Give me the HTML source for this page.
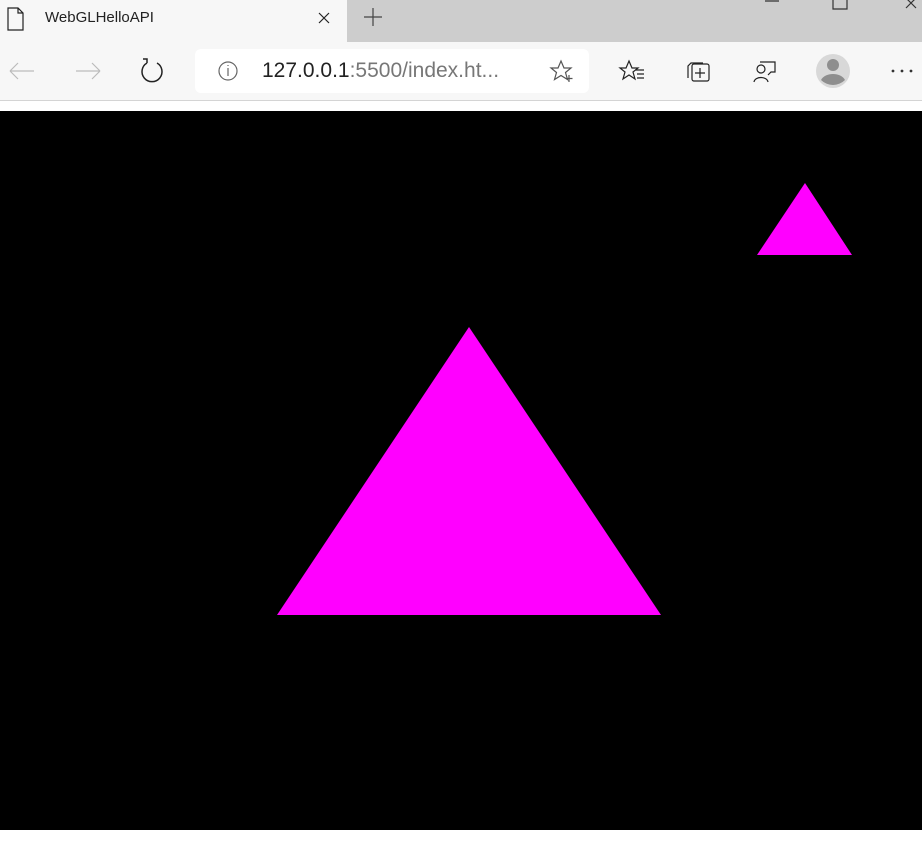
<!DOCTYPE html><html><head><style>
body{margin:0;width:922px;height:860px;background:#fff;position:relative;overflow:hidden;font-family:"Liberation Sans",sans-serif}
.a{position:absolute}
</style></head><body>
<div class="a" style="left:0;top:0;width:922px;height:42px;background:#cdcdcd"></div>
<div class="a" style="left:0;top:0;width:347px;height:43px;background:#f7f7f7"></div>
<div class="a" style="left:0;top:42px;width:922px;height:58px;background:#f7f7f7"></div>
<div class="a" style="left:0;top:100px;width:922px;height:1px;background:#d4d4d4"></div>
<div class="a" style="left:195px;top:49px;width:394px;height:44px;background:#fff;border-radius:6px"></div>
<svg class="a" style="left:0;top:0" width="922" height="110">
<g fill="none" stroke="#222" stroke-width="1.2">
<path d="M8 8h10l5 5v17H8z M18 8v5h5"/>
<path d="M319 13l10 10M329 13l-10 10"/>
<path d="M373 8v18M364 17h18" stroke="#444"/>
<path d="M765 1h14M833 -1v10h14V-1M906 -2l10 10M916 -2l-10 10" stroke="#333"/>
<path d="M34 71H10M10 71l8-8M10 71l8 8" stroke="#bbb"/>
<path d="M76 71h24M100 71l-8-8M100 71l-8 8" stroke="#bbb"/>
<path d="M147 63a10 10 0 1 0 10 0M147 63v-4h-4" stroke="#222" stroke-width="1.5"/>
<circle cx="228" cy="71" r="9" stroke="#666"/><path d="M228 68v8M228 65v1" stroke="#666"/>
<path d="M561 61l3 7h7l-5.5 4.5 2 7-6.5-4-6.5 4 2-7-5.5-4.5h7z M569 75v7M565.5 78.5h7" stroke="#555"/>
<path d="M629 61l3 7h6l-5 4 2 7-6-4-6 4 2-7-5-4h6z M635 70h9M637 74h7M637 78h7" stroke="#222"/>
<rect x="692" y="64" width="17" height="17" rx="2"/><path d="M688 78V66l3-3h12M700 68v10M695 73h10"/>
<circle cx="761" cy="69" r="4"/><path d="M754 82c1-6 13-6 14 0M760 62h15v10h-4l-3 3"/>
</g>
<circle cx="833" cy="71" r="17" fill="#d8d8d8"/><circle cx="833" cy="65" r="6" fill="#8e8e8e"/><path d="M821 80c4-8 20-8 24 0a17 17 0 0 1-24 0z" fill="#8e8e8e"/>
<g fill="#333"><circle cx="893" cy="71" r="1.4"/><circle cx="902" cy="71" r="1.4"/><circle cx="911" cy="71" r="1.4"/></g>
</svg>
<div class="a" style="left:45px;top:9px;font-size:15px;color:#222">WebGLHelloAPI</div>
<div class="a" style="left:262px;top:59px;font-size:21px;color:#222">127.0.0.1<span style="color:#777">:5500/index.ht...</span></div>
<div class="a" style="left:0;top:111px;width:922px;height:719px;background:#000"></div>
<svg class="a" style="left:0;top:0" width="922" height="860"><polygon points="469,327 277,615 661,615" fill="#f0f"/><polygon points="805,183 757,255 852,255" fill="#f0f"/></svg>
</body></html>
